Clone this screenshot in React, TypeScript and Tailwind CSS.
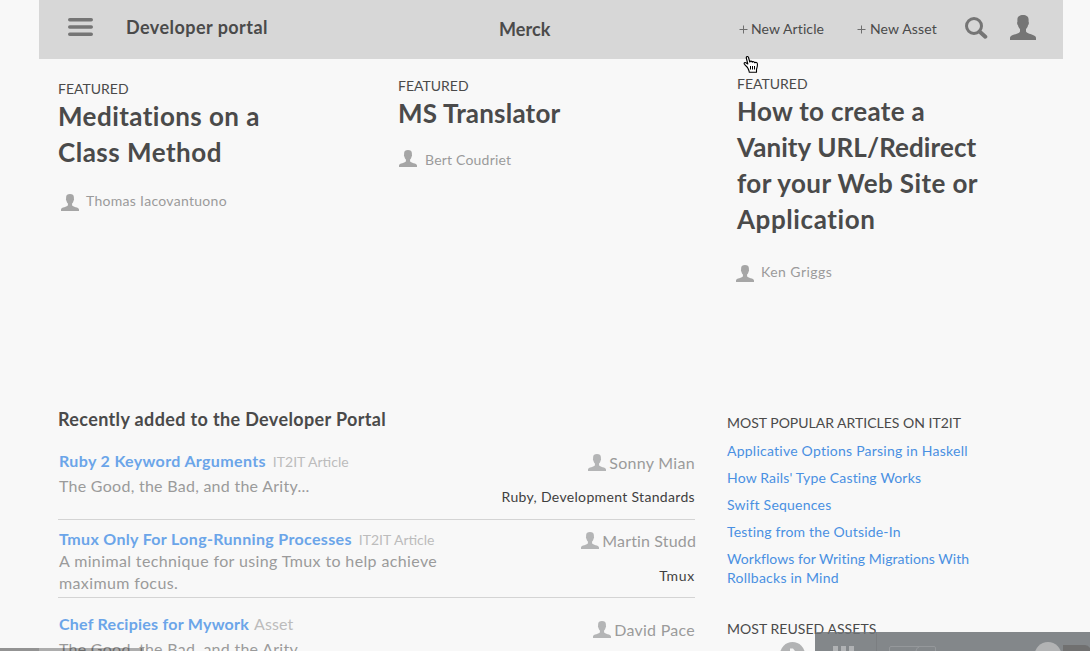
import React from "react";

function Person({ className }: { className: string }) {
  return (
    <svg viewBox="0 0 26 25" preserveAspectRatio="none" fill="currentColor" className={"shrink-0 " + className}>
      <path d="M13 0C9.6 0 7.4 1.6 7.4 4.6v2.200c-.6.800-.2 2.800.6 3.400.3 1.700.9 2.700 2 3.800v2.600C9.600 19.200 0 19.400 0 22.800V25h26v-2.200c0-3.400-9.600-3.600-10-6.200v-2.600c1.100-1.100 1.700-2.100 2-3.800.8-.6 1.200-2.600.6-3.400V4.600C18.600 1.600 16.400 0 13 0z" />
    </svg>
  );
}

function Plus({ className }: { className: string }) {
  return (
    <svg viewBox="0 0 9 9" className={"h-[9px] w-[9px] shrink-0 text-[#6e6e6e] " + className}>
      <path d="M4.500 .5v8M.5 4.500h8" stroke="currentColor" strokeWidth="1" />
    </svg>
  );
}

function Header() {
  return (
    <header className="ml-[39px] flex h-[59px] w-[1024px] items-start whitespace-nowrap bg-[#d7d7d7] text-[#4a4a4a]">
      <svg viewBox="0 0 25 18" className="mt-[18px] ml-[29px] h-[18px] w-[25px] shrink-0 text-[#757575]">
        <path d="M1.750 1.750h21.500M1.750 9h21.500M1.750 16.250h21.500" stroke="currentColor" strokeWidth="3.500" strokeLinecap="round" />
      </svg>
      <div className="mt-[15px] ml-[33px] w-[373px] text-[18px] leading-[24px] font-bold tracking-[0.45px]">Developer portal</div>
      <div className="mt-[17px] w-[240px] text-[18px] leading-[24px] font-bold tracking-[0.1px]">Merck</div>
      <Plus className="mt-[25px]" />
      <div className="mt-[19px] ml-[3px] w-[106px] text-[14px] leading-[20px] tracking-[0.1px]">New Article</div>
      <Plus className="mt-[25px]" />
      <div className="mt-[19px] ml-[4px] w-[95px] text-[14px] leading-[20px] tracking-[0.15px]">New Asset</div>
      <svg viewBox="0 0 23 22" fill="none" className="mt-[17px] h-[22px] w-[23px] shrink-0 text-[#757575]">
        <circle cx="9" cy="9" r="7.500" stroke="currentColor" strokeWidth="3" />
        <path d="M14.500 14.500l5.800 5.200" stroke="currentColor" strokeWidth="4" strokeLinecap="round" />
      </svg>
      <Person className="mt-[15px] ml-[22px] h-[25px] w-[26px] text-[#757575]" />
    </header>
  );
}

type Line = { text: string; className: string };

type FeatureProps = { className: string; lines: Line[]; author: string; authorClass: string; nameClass: string };

function Feature({ className, lines, author, authorClass, nameClass }: FeatureProps) {
  return (
    <article className={"shrink-0 whitespace-nowrap " + className}>
      <div className="h-[19px] text-[14px] leading-[20px] text-[#4a4a4a]">FEATURED</div>
      <h2 className="text-[26px] leading-[36px] font-bold text-[#4a4a4a]">
        {lines.map((line) => (
          <span key={line.text} className={"block " + line.className}>{line.text}</span>
        ))}
      </h2>
      <div className={"flex items-start text-[#9b9b9b] " + authorClass}>
        <Person className="h-[17px] w-[18px] text-[#a6a6a6]" />
        <span className={"text-[14px] leading-[20px] " + nameClass}>{author}</span>
      </div>
    </article>
  );
}

type EntryProps = {
  className: string;
  title: string;
  titleClass: string;
  kind: string;
  kindClass: string;
  body: string[];
  bodyClass: string;
  author: string;
  authorClass: string;
  tags: string;
  tagsClass: string;
};

function Entry(p: EntryProps) {
  return (
    <li className={"flex justify-between whitespace-nowrap " + p.className}>
      <div className="pl-px">
        <div className="flex h-[22px] items-baseline leading-[22px]">
          <a className={"text-[16px] font-bold text-[#6ba5e9] " + p.titleClass}>{p.title}</a>
          <span className={"text-[#bcbcbc] " + p.kindClass}>{p.kind}</span>
        </div>
        <p className={"text-[16px] leading-[22px] text-[#9b9b9b] " + p.bodyClass}>
          {p.body.map((line) => (
            <span key={line} className="block">{line}</span>
          ))}
        </p>
      </div>
      <div className="flex flex-col items-end pt-[2px]">
        <div className={"flex items-start text-[#9b9b9b] " + p.authorClass}>
          <Person className="mt-[2px] mr-[3px] h-[17px] w-[18px] text-[#b4b5b6]" />
          <span className="text-[16px] leading-[22px]">{p.author}</span>
        </div>
        <div className={"text-[14px] leading-[20px] text-[#3f3f3f] " + p.tagsClass}>{p.tags}</div>
      </div>
    </li>
  );
}

export default function App() {
  return (
    <div className="relative h-[651px] w-[1090px] overflow-hidden bg-[#f8f8f8] font-['Lato',sans-serif]">
      <Header />

      <section className="flex h-[341px] items-start pl-[58px]">
        <Feature
          className="mt-[20px] w-[340px]"
          lines={[
            { text: "Meditations on a", className: "tracking-[0.44px]" },
            { text: "Class Method", className: "tracking-[0.5px]" },
          ]}
          author="Thomas Iacovantuono"
          authorClass="mt-[24px] ml-[3px]"
          nameClass="-mt-[3px] ml-[7px] tracking-[0.3px]"
        />
        <Feature
          className="mt-[17px] w-[339px]"
          lines={[{ text: "MS Translator", className: "tracking-[0.2px]" }]}
          author="Bert Coudriet"
          authorClass="mt-[19px] ml-px"
          nameClass="ml-[8px] tracking-[0.2px]"
        />
        <Feature
          className="mt-[15px] w-[260px]"
          lines={[
            { text: "How to create a", className: "tracking-[0.3px]" },
            { text: "Vanity URL/Redirect", className: "tracking-[0.08px]" },
            { text: "for your Web Site or", className: "tracking-[0.4px]" },
            { text: "Application", className: "tracking-[0.58px]" },
          ]}
          author="Ken Griggs"
          authorClass="mt-[28px] -ml-px"
          nameClass="-mt-[3px] ml-[7px] tracking-[0.45px]"
        />
      </section>

      <main className="flex h-[251px] items-start pl-[58px]">
        <section className="w-[637px] shrink-0">
          <h3 className="pt-[7px] text-[18px] leading-[24px] font-bold tracking-[0.36px] text-[#4a4a4a]">Recently added to the Developer Portal</h3>
          <ul className="pt-[19px]">
            <Entry
              className="h-[70px] border-b border-[#d4d4d4]"
              title="Ruby 2 Keyword Arguments"
              titleClass="tracking-[0.35px]"
              kind="IT2IT Article"
              kindClass="ml-[7px] text-[14px]"
              body={["The Good, the Bad, and the Arity..."]}
              bodyClass="mt-[3px] tracking-[0.27px]"
              author="Sonny Mian"
              authorClass="tracking-[0.3px]"
              tags="Ruby, Development Standards"
              tagsClass="mt-[13px] tracking-[0.33px]"
            />
            <Entry
              className="h-[78px] border-b border-[#d4d4d4] pt-[8px]"
              title="Tmux Only For Long-Running Processes"
              titleClass="tracking-[0.33px]"
              kind="IT2IT Article"
              kindClass="ml-[7px] text-[14px]"
              body={["A minimal technique for using Tmux to help achieve", "maximum focus."]}
              bodyClass="tracking-[0.37px]"
              author="Martin Studd"
              authorClass="-mr-px tracking-[0.15px]"
              tags="Tmux"
              tagsClass="mt-[14px] tracking-[0.7px]"
            />
            <Entry
              className="h-[70px] pt-[15px]"
              title="Chef Recipies for Mywork"
              titleClass="tracking-[0.25px]"
              kind="Asset"
              kindClass="ml-[5px] text-[16px] tracking-[0.1px]"
              body={["The Good, the Bad, and the Arity"]}
              bodyClass="mt-[3px] tracking-[0.27px]"
              author="David Pace"
              authorClass="mt-[4px] tracking-[0.27px]"
              tags=""
              tagsClass=""
            />
          </ul>
        </section>

        <aside className="ml-[32px] w-[300px] shrink-0 whitespace-nowrap text-[14px] text-[#4a90e2]">
          <h4 className="mt-[13px] leading-[20px] text-[#4a4a4a]">MOST POPULAR ARTICLES ON IT2IT</h4>
          <ul className="mt-[8px] flex flex-col gap-[8px] leading-[19px]">
            <li className="tracking-[0.24px]">Applicative Options Parsing in Haskell</li>
            <li className="tracking-[0.17px]">How Rails' Type Casting Works</li>
            <li className="tracking-[0.23px]">Swift Sequences</li>
            <li className="tracking-[0.17px]">Testing from the Outside-In</li>
            <li>
              <span className="block tracking-[0.05px]">Workflows for Writing Migrations With</span>
              <span className="block tracking-[0.24px]">Rollbacks in Mind</span>
            </li>
          </ul>
          <h4 className="mt-[32px] leading-[20px] tracking-[0.05px] text-[#4a4a4a]">MOST REUSED ASSETS</h4>
        </aside>
      </main>

      <div className="absolute bottom-0 left-0 flex h-[3px] w-[144px] bg-black/30">
        <div className="h-[3px] w-[39px] bg-black/15" />
      </div>

      <svg viewBox="0 0 310 19" className="absolute bottom-0 left-[780px] h-[19px] w-[310px]">
        <circle cx="12.500" cy="22.500" r="12.500" fill="#b2b3b4" />
        <path d="M10 16.500h3l2 2.500h-5z" fill="#f4f4f4" />
        <path d="M35 19V2q0-2 2-2h273v19z" fill="#6d7175" fillOpacity=".84" />
        <path d="M96.500 0v19" stroke="#7b7e81" />
        <path d="M53 14h5v5h-5zM61 14h5v5h-5zM69 14h5v5h-5z" fill="#b0b2b4" />
        <path d="M109.500 19v-3q0-1.500 1.500-1.500h43q1.500 0 1.500 1.500v3M136 19q0-3 3-4" stroke="#95989b" fill="none" />
        <path d="M283 13h22q3 0 5 3v3h-27z" fill="#707070" />
        <circle cx="268" cy="23.500" r="13.500" fill="#b2b3b4" />
      </svg>

      <svg viewBox="0 0 16 18" className="absolute top-[56px] left-[743px] h-[18px] w-[16px]">
        <path d="M4.500 11.500 1.500 8.300C.5 7 1.800 6 3.300 7l1.500 1L3.300 2C3 .3 5 0 5.500 1.500L6.800 6C7.300 4.600 9 5 9.200 6.200 10 5.200 11.500 5.600 11.700 6.800c1-.8 2.700-.2 2.700 1.200.2 2.500-.4 3.500-.9 5.200v3H6.300C6.300 14.500 5.200 13 4.500 11.500z" fill="white" stroke="black" strokeWidth="1.100" strokeLinejoin="round" />
        <path d="M7.500 10v3.500M9.500 10v3.500M11.500 10v3.500" stroke="black" />
      </svg>
    </div>
  );
}
